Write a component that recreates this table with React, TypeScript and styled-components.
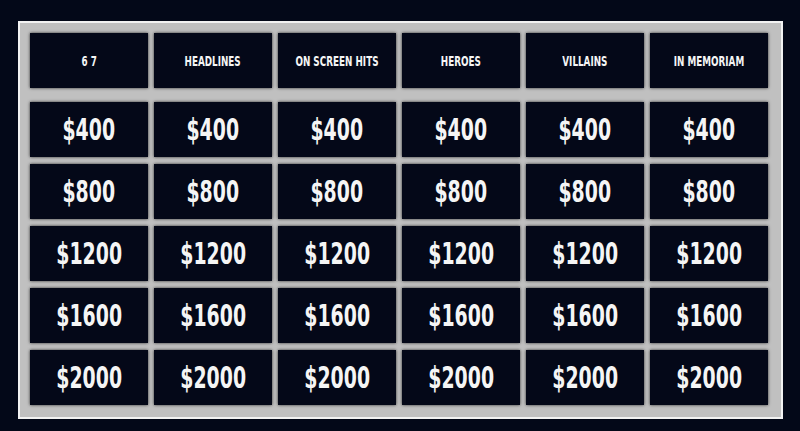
import React from 'react';
import styled, {createGlobalStyle} from 'styled-components';

const GlobalStyle = createGlobalStyle`
    html, body {
        margin: 0;
        padding: 0;
        background: #030818;
    }
    body {
        font-family: 'DejaVu Sans', 'Liberation Sans', sans-serif;
    }
`;

const Page = styled.div`
    width: 800px;
    height: 431px;
    padding: 21px 0 0 18px;
    box-sizing: border-box;
    background: #030818;
`;

const Board = styled.div`
    width: 765px;
    box-sizing: border-box;
    border: 2px solid #f2f2f2;
    background: #c0c0c0;
    padding: 10px 13px 12px 10px;
    display: grid;
    grid-template-columns: repeat(6, 118px);
    grid-template-rows: 62px repeat(5, 55px);
    column-gap: 6px;
    row-gap: 7px;
`;

const Cell = styled.div<{$header?: boolean}>`
    height: 55px;
    align-self: start;
    background: #040818;
    box-shadow: 0 0 3px rgba(0, 0, 0, 0.75);
    display: flex;
    align-items: center;
    justify-content: center;
    color: #f5f5f5;
    font-weight: 700;
    text-transform: uppercase;
    white-space: nowrap;
    font-size: ${(p) => (p.$header ? '14px' : '30px')};
`;

const Label = styled.span`
    display: inline-block;
    transform: scaleX(0.63);
    transform-origin: center;
`;

const categories = ['6 7', 'Headlines', 'On Screen Hits', 'Heroes', 'Villains', 'In Memoriam'];
const values = [400, 800, 1200, 1600, 2000];

const App = () => (
    <>
        <GlobalStyle/>
        <Page>
            <Board>
                {categories.map((c) => (
                    <Cell
                        key={c}
                        $header={true}
                    >
                        <Label>{c}</Label>
                    </Cell>
                ))}
                {values.map((v) =>
                    categories.map((c) => (
                        <Cell key={c + v}>
                            <Label>{'$' + v}</Label>
                        </Cell>
                    )),
                )}
            </Board>
        </Page>
    </>
);

export default App;
